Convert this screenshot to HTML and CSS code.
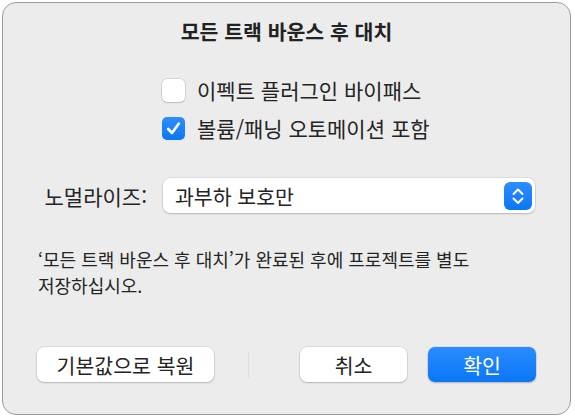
FILE: index.html
```html
<!DOCTYPE html>
<html lang="ko">
<head>
    <meta charset="UTF-8">
    <meta name="viewport" content="width=device-width, initial-scale=1.0">
    <title>모든 트랙 바운스 후 대치</title>
    <link rel="stylesheet" href="styles.css">
</head>
<body>

    <div class="dialog">
        <h1 class="title">모든 트랙 바운스 후 대치</h1>

        <div class="options">
            <label class="option">
                <span class="check"></span>
                <span>이펙트 플러그인 바이패스</span>
            </label>
            <label class="option">
                <span class="check checked">
                    <svg width="23" height="23" viewBox="0 0 23 23">
                        <polyline points="6.2,12 10,16 16.8,6.6" fill="none" stroke="#fff" stroke-width="2.6" stroke-linecap="round" stroke-linejoin="round"/>
                    </svg>
                </span>
                <span>볼륨/패닝 오토메이션 포함</span>
            </label>
        </div>

        <div class="field">
            <span class="field-label">노멀라이즈:</span>
            <div class="select">
                <span>과부하 보호만</span>
                <span class="stepper">
                    <svg width="28" height="28" viewBox="0 0 28 28">
                        <polyline points="9.5,12 14,7.5 18.5,12" fill="none" stroke="#fff" stroke-width="2" stroke-linecap="round" stroke-linejoin="round"/>
                        <polyline points="9.5,16.5 14,21 18.5,16.5" fill="none" stroke="#fff" stroke-width="2" stroke-linecap="round" stroke-linejoin="round"/>
                    </svg>
                </span>
            </div>
        </div>

        <p class="note">‘모든 트랙 바운스 후 대치’가 완료된 후에 프로젝트를 별도<br>저장하십시오.</p>

        <div class="buttons">
            <button class="btn btn-reset">기본값으로 복원</button>
            <span class="divider"></span>
            <span class="spacer"></span>
            <button class="btn btn-cancel">취소</button>
            <button class="btn btn-ok">확인</button>
        </div>
    </div>

</body>
</html>
```

FILE: styles.css
```css
body {
    margin: 0;
    background: #ffffff;
    font-family: 'Noto Sans CJK KR', 'Noto Sans', sans-serif;
    color: #242424;
}

.dialog {
    box-sizing: border-box;
    width: 569px;
    height: 413px;
    margin: 2px 0 0 2px;
    background: #ececec;
    border: 1px solid #9c9c9c;
    border-radius: 14px;
    display: flex;
    flex-direction: column;
}

.title {
    margin: 16px 0 0 0;
    font-size: 20.5px;
    font-weight: 700;
    line-height: 24px;
    text-align: center;
    color: #222;
}

.options {
    display: flex;
    flex-direction: column;
    gap: 14px;
    margin-top: 35px;
    padding-left: 159px;
}

.option {
    display: flex;
    align-items: center;
    gap: 12px;
    font-size: 21px;
    line-height: 24px;
}

.check {
    box-sizing: border-box;
    width: 23px;
    height: 23px;
    border-radius: 5px;
    background: #fff;
    box-shadow: 0 0 0 0.5px rgba(0, 0, 0, 0.18), 0 1px 1.5px rgba(0, 0, 0, 0.12);
    display: flex;
}

.check.checked {
    background: linear-gradient(#2f8dff, #0a77f5);
    box-shadow: none;
}

.field {
    display: grid;
    grid-template-columns: 144px 1fr;
    gap: 16px;
    align-items: center;
    margin-top: 38px;
    padding-right: 35px;
}

.field-label {
    text-align: right;
    font-size: 21px;
    line-height: 24px;
}

.select {
    box-sizing: border-box;
    height: 35px;
    background: #fff;
    border-radius: 7px;
    box-shadow: 0 0 0 0.5px rgba(0, 0, 0, 0.12), 0 1px 2px rgba(0, 0, 0, 0.18);
    display: flex;
    align-items: center;
    justify-content: space-between;
    padding: 0 3px 0 12px;
    font-size: 20.5px;
}

.stepper {
    width: 28px;
    height: 28px;
    border-radius: 6px;
    background: linear-gradient(#2f8dff, #0a77f5);
    display: flex;
}

.note {
    margin: 33px 0 0 0;
    padding-left: 35px;
    font-size: 18px;
    line-height: 26px;
}

.buttons {
    display: flex;
    align-items: center;
    margin-top: 49px;
    padding: 0 34px;
}

.btn {
    height: 35px;
    border: none;
    border-radius: 7px;
    background: #fff;
    font-family: inherit;
    font-size: 20.5px;
    color: #242424;
    padding: 0;
    box-shadow: 0 0 0 0.5px rgba(0, 0, 0, 0.12), 0 1px 2px rgba(0, 0, 0, 0.2);
}

.btn-reset {
    width: 177px;
}

.divider {
    width: 1px;
    height: 26px;
    margin-left: 34px;
    background: #dedede;
}

.spacer {
    flex: 1;
}

.btn-cancel {
    width: 107px;
}

.btn-ok {
    width: 108px;
    margin-left: 21px;
    color: #fff;
    background: linear-gradient(#2a8bff, #0a77f7);
}
```
